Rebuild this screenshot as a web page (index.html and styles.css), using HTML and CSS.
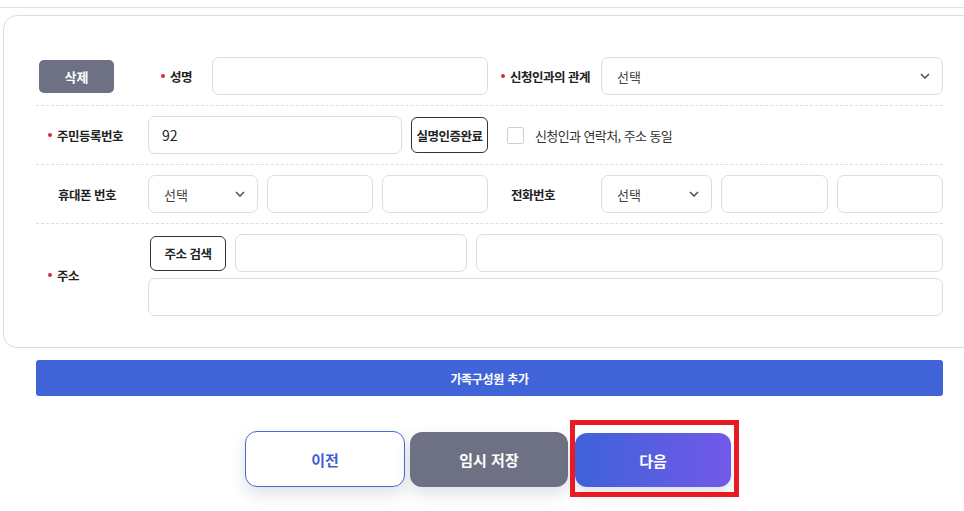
FILE: index.html
```html
<!DOCTYPE html>
<html lang="ko">
<head>
<meta charset="utf-8">
<link rel="stylesheet" href="styles.css">
</head>
<body>
<div class="topline"></div>
<div class="wrap">
  <div class="card">
    <div class="row">
      <div class="cell"><button class="btn-del">삭제</button></div>
      <div class="cell">
        <span class="lbl lbl-name"><i class="dot"></i>성명</span>
        <div class="inp grow"></div>
      </div>
      <div class="cell"><span class="lbl lbl-c3"><i class="dot"></i>신청인과의 관계</span></div>
      <div class="cell"><div class="sel grow"><span>선택</span><svg class="chev" viewBox="0 0 10 6"><path d="M1 1l4 4 4-4"/></svg></div></div>
    </div>
    <div class="row">
      <div class="cell"><span class="lbl lbl-c1"><i class="dot"></i>주민등록번호</span></div>
      <div class="cell gap9">
        <div class="inp grow"><span class="val">92</span></div>
        <button class="btn-line w77">실명인증완료</button>
      </div>
      <div class="cell span2">
        <span class="chk"></span><span class="chk-txt">신청인과 연락처, 주소 동일</span>
      </div>
    </div>
    <div class="row">
      <div class="cell"><span class="lbl lbl-c1 nodot">휴대폰 번호</span></div>
      <div class="cell gap9">
        <div class="sel w110"><span>선택</span><svg class="chev" viewBox="0 0 10 6"><path d="M1 1l4 4 4-4"/></svg></div>
        <div class="inp grow"></div>
        <div class="inp grow"></div>
      </div>
      <div class="cell"><span class="lbl lbl-c3 nodot">전화번호</span></div>
      <div class="cell gap9">
        <div class="sel w111"><span>선택</span><svg class="chev" viewBox="0 0 10 6"><path d="M1 1l4 4 4-4"/></svg></div>
        <div class="inp grow"></div>
        <div class="inp grow"></div>
      </div>
    </div>
    <div class="row last">
      <div class="cell"><span class="lbl lbl-c1"><i class="dot"></i>주소</span></div>
      <div class="addr">
        <div class="addr-line">
          <button class="btn-line w76">주소 검색</button>
          <div class="inp w232"></div>
          <div class="inp grow"></div>
        </div>
        <div class="addr-line">
          <div class="inp grow"></div>
        </div>
      </div>
    </div>
  </div>
  <div class="addbar">가족구성원 추가</div>
  <div class="actions">
    <button class="act prev">이전</button>
    <button class="act save">임시 저장</button>
    <div class="next-wrap">
      <button class="act next">다음</button>
      <span class="mark"></span>
    </div>
  </div>
</div>
</body>
</html>
```
FILE: styles.css
```css
* { box-sizing: border-box; }
html, body { margin: 0; padding: 0; }
body {
  background: #fff;
  overflow: hidden;
  width: 964px;
  height: 511px;
  font-family: "Noto Sans CJK KR", "Noto Sans", sans-serif;
  color: #222;
}
button { font-family: inherit; cursor: pointer; }
.topline { height: 8px; border-bottom: 1px solid #e3e3e3; }
.wrap { margin: 7px 0 0 3px; width: 973px; }
.card {
  border: 1px solid #dcdcdc;
  border-radius: 14px;
  padding: 31px 32px 21px;
}
.row {
  display: grid;
  grid-template-columns: 112px 340px 113px 342px;
  padding: 10px 0;
  border-bottom: 1px dashed #dedede;
}
.row.last { border-bottom: none; }
.cell { display: flex; align-items: center; height: 38px; }
.row.last > .cell { height: auto; }
.span2 { grid-column: span 2; }
.gap9 { gap: 9px; }
.grow { flex: 1; }
.lbl {
  display: flex; align-items: center;
  font-size: 12.5px; font-weight: 700; color: #222;
  white-space: nowrap; letter-spacing: -0.5px;
}
.dot { display: inline-block; width: 4px; height: 4px; border-radius: 50%; background: #d9283b; margin-right: 5px; }
.lbl-c1 { padding-left: 12px; }
.lbl-c1.nodot { padding-left: 22px; }
.lbl-c3 { padding-left: 13px; }
.lbl-c3.nodot { padding-left: 23px; }
.lbl-name { padding-left: 13px; width: 64px; flex: none; }
.btn-del {
  margin-left: 3px; width: 75px; height: 33px;
  background: #6e7184; color: #fff; border: none; border-radius: 5px;
  font-size: 13px; font-weight: 700;
}
.inp, .sel {
  height: 38px; border: 1px solid #dddddd; border-radius: 7px; background: #fff;
  display: flex; align-items: center; font-size: 13px;
}
.inp .val { padding-left: 13px; font-size: 14px; color: #222; }
.sel { justify-content: space-between; padding: 0 12px 0 15px; color: #444; }
.chev { width: 10px; height: 6px; fill: none; stroke: #555; stroke-width: 1.6; }
.w110 { width: 110px; flex: none; }
.w111 { width: 111px; flex: none; }
.w232 { width: 232px; flex: none; }
.btn-line {
  background: #fff; border: 1.5px solid #333; border-radius: 6px;
  font-size: 12.5px; font-weight: 700; color: #222; padding: 0; letter-spacing: -0.5px;
}
.w77 { width: 77px; height: 36px; flex: none; }
.w76 { width: 76px; height: 35px; flex: none; margin-left: 2px; }
.chk {
  width: 17px; height: 17px; border: 1px solid #c9cfdd; border-radius: 2px;
  margin-left: 19px; background: #fff;
}
.chk-txt { margin-left: 11px; font-size: 13px; color: #333; letter-spacing: -0.6px; }
.addr { grid-column: span 3; display: flex; flex-direction: column; gap: 6px; }
.addr-line { display: flex; gap: 9px; align-items: center; }
.addr-line .inp { height: 38px; }
.addbar {
  margin: 12px 33px 0; height: 36px; background: #4063d8; border-radius: 3px;
  color: #fff; font-size: 12px; font-weight: 700; letter-spacing: -0.3px;
  display: flex; align-items: center; justify-content: center;
}
.actions {
  display: flex; justify-content: center; align-items: flex-start;
  gap: 5px; margin-top: 35px; padding-right: 3px;
}
.act {
  width: 158px; height: 55px; border-radius: 12px;
  font-size: 15px; font-weight: 700;
  box-shadow: 0 7px 16px rgba(30, 40, 80, 0.14);
}
.prev { background: #fff; color: #3f5ed6; border: 1px solid #4a67d9; width: 160px; height: 56px; }
.save { background: #6e7184; color: #fff; border: none; margin-top: 1px; }
.next-wrap { position: relative; margin-left: 2px; }
.next {
  display: block;
  width: 156px; height: 54px; margin-top: 2px; border: none;
  background: linear-gradient(90deg, #3e62d8, #7259e9); color: #fff;
}
.mark {
  position: absolute; left: -5px; top: -11px; width: 169px; height: 77px;
  border: 5px solid #e81b24;
}
```
